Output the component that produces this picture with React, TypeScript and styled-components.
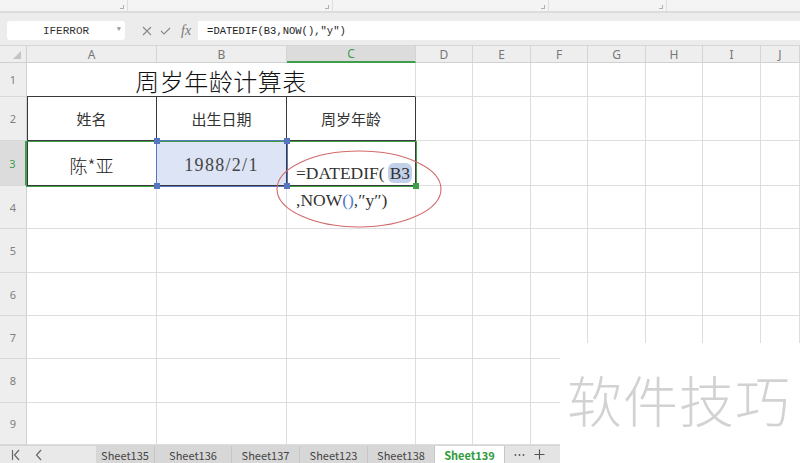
import styled, { createGlobalStyle } from "styled-components";

const GlobalStyle = createGlobalStyle`
  html, body { margin: 0; padding: 0; }
  body {
    width: 800px;
    height: 463px;
    overflow: hidden;
    background: #fff;
    font-family: "Noto Sans CJK SC", "Noto Sans", sans-serif;
  }
`;

const COL_WIDTHS = [130, 130, 129, 57, 58, 57, 58, 57, 58, 39];
const COL_NAMES = ["A", "B", "C", "D", "E", "F", "G", "H", "I", "J"];
const ROW_HEIGHTS = [34, 44, 45, 43, 44, 43, 43, 44, 42];
const GROUP_MARKS = [120, 325, 541, 659];
const SHEETS = [
  { name: "Sheet135", width: 59 },
  { name: "Sheet136", width: 77 },
  { name: "Sheet137", width: 68 },
  { name: "Sheet123", width: 68 },
  { name: "Sheet138", width: 67 },
];

const Page = styled.div`
  position: relative;
  width: 800px;
  height: 463px;
  display: flex;
  flex-direction: column;
  overflow: hidden;
`;

const Ribbon = styled.div`
  height: 11px;
  flex-shrink: 0;
  background: #f4f4f4;
  border-bottom: 2px solid #dcdcdc;
  position: relative;
`;

const GroupMark = styled.div<{ $x: number }>`
  position: absolute;
  left: ${(p) => p.$x}px;
  top: 5px;
  width: 3px;
  height: 3px;
  border-right: 1px solid #b0b0b0;
  border-bottom: 1px solid #b0b0b0;
  &::after {
    content: "";
    position: absolute;
    left: 7px;
    top: -5px;
    width: 1px;
    height: 11px;
    background: #dedede;
  }
`;

const FormulaBar = styled.div`
  height: 33px;
  flex-shrink: 0;
  background: #ececec;
  display: flex;
  align-items: flex-start;
  padding-top: 8px;
  box-sizing: border-box;
  border-bottom: 1px solid #d6d6d6;
`;

const NameBox = styled.div`
  margin-left: 7px;
  width: 118px;
  height: 19px;
  background: #fff;
  border-radius: 3px;
  display: flex;
  align-items: center;
  justify-content: center;
  position: relative;
  font-family: "Liberation Mono", "DejaVu Sans Mono", monospace;
  font-size: 11px;
  color: #333;
`;

const Caret = styled.span`
  position: absolute;
  right: 4px;
  top: 4px;
  font-size: 7px;
  color: #999;
`;

const BarIcons = styled.div`
  display: flex;
  align-items: center;
  height: 19px;
  margin-left: 17px;
  gap: 8px;
  color: #8a8a8a;
`;

const Fx = styled.span`
  font-family: "Liberation Serif", serif;
  font-style: italic;
  font-size: 14px;
  color: #777;
  margin-left: 2px;
`;

const FormulaInput = styled.div`
  margin-left: 7px;
  flex: 1;
  height: 19px;
  background: #fff;
  display: flex;
  align-items: center;
  padding-left: 9px;
  font-family: "Liberation Mono", "DejaVu Sans Mono", monospace;
  font-size: 10.5px;
  color: #222;
`;

const Sheet = styled.div`
  display: grid;
  flex-shrink: 0;
  grid-template-columns: 27px ${COL_WIDTHS.map((w) => `${w}px`).join(" ")};
  grid-template-rows: 17px ${ROW_HEIGHTS.map((h) => `${h}px`).join(" ")};
  background: #fff;
`;

const Corner = styled.div`
  background: #eeeeee;
  border-right: 1px solid #d0d0d0;
  border-bottom: 1px solid #d0d0d0;
  position: relative;
  &::after {
    content: "";
    position: absolute;
    right: 5px;
    bottom: 3px;
    border-left: 8px solid transparent;
    border-bottom: 8px solid #c4c4c4;
  }
`;

const ColHead = styled.div<{ $active?: boolean }>`
  background: ${(p) => (p.$active ? "#dcdcdc" : "#eeeeee")};
  border-right: 1px solid #d4d4d4;
  border-bottom: ${(p) => (p.$active ? "2px solid #3f9e4a" : "1px solid #d0d0d0")};
  display: flex;
  align-items: center;
  justify-content: center;
  font-family: "Noto Sans", sans-serif;
  font-size: 12px;
  color: ${(p) => (p.$active ? "#3f9e4a" : "#777")};
  box-sizing: border-box;
`;

const RowHead = styled.div<{ $active?: boolean }>`
  background: ${(p) => (p.$active ? "#dcdcdc" : "#eeeeee")};
  border-right: ${(p) => (p.$active ? "2px solid #3f9e4a" : "1px solid #d0d0d0")};
  border-bottom: 1px solid #d8d8d8;
  display: flex;
  align-items: center;
  justify-content: center;
  font-family: "Noto Sans", sans-serif;
  font-size: 11px;
  color: ${(p) => (p.$active ? "#3f9e4a" : "#808080")};
  box-sizing: border-box;
`;

const Cell = styled.div<{ $dark?: boolean; $first?: boolean; $fill?: string; $span?: number; $darkBottom?: boolean }>`
  grid-column: span ${(p) => p.$span ?? 1};
  background: ${(p) => p.$fill ?? "#fff"};
  border-right: 1px solid ${(p) => (p.$dark ? "#3a3a3a" : "#dedede")};
  border-bottom: 1px solid ${(p) => (p.$dark || p.$darkBottom ? "#3a3a3a" : "#dedede")};
  box-shadow: ${(p) => (p.$first ? "inset 1px 0 #3a3a3a" : "none")};
  box-sizing: border-box;
  display: flex;
  align-items: center;
  justify-content: center;
  color: #222;
`;

const Title = styled.span`
  font-size: 24px;
  font-weight: 300;
  letter-spacing: 0.5px;
  color: #111;
  margin-top: 1px;
`;

const HeadText = styled.span`
  font-size: 15px;
  color: #333;
`;

const NameText = styled.span`
  font-size: 18px;
  font-weight: 300;
  color: #222;
  margin-top: 4px;
`;

const DateText = styled.span`
  font-family: "Liberation Serif", serif;
  font-size: 18px;
  letter-spacing: 1.3px;
  color: #444;
  margin-top: 4px;
`;

const Selection = styled.div<{ $x: number; $y: number; $w: number; $h: number; $color: string }>`
  position: absolute;
  left: ${(p) => p.$x}px;
  top: ${(p) => p.$y}px;
  width: ${(p) => p.$w}px;
  height: ${(p) => p.$h}px;
  border: 1.5px solid ${(p) => p.$color};
  box-sizing: border-box;
  pointer-events: none;
`;

const Handle = styled.div<{ $x: number; $y: number; $color: string }>`
  position: absolute;
  left: ${(p) => p.$x - 3}px;
  top: ${(p) => p.$y - 3}px;
  width: 6px;
  height: 6px;
  background: ${(p) => p.$color};
`;

const OverflowText = styled.div`
  position: absolute;
  left: 296px;
  top: 160px;
  font-family: "Liberation Serif", "DejaVu Serif", serif;
  font-size: 17.5px;
  line-height: 27px;
  color: #333;
  white-space: nowrap;
`;

const Ref = styled.span`
  background: #c3d0ea;
  border-radius: 6px;
  padding: 0 2px;
  margin-left: 3px;
`;

const Paren = styled.span`
  color: #4f78c8;
`;

const Ring = styled.svg`
  position: absolute;
  left: 274px;
  top: 148px;
`;

const TabBar = styled.div`
  height: 18px;
  flex-shrink: 0;
  box-sizing: border-box;
  display: flex;
  background: #e9e9e9;
  border-top: 1px solid #d6d6d6;
  font-size: 11px;
`;

const Nav = styled.div`
  width: 96px;
  display: flex;
  align-items: center;
  gap: 12px;
  padding-left: 11px;
  box-sizing: border-box;
  color: #666;
`;

const Tab = styled.div<{ $w: number; $active?: boolean }>`
  width: ${(p) => p.$w}px;
  display: flex;
  align-items: center;
  justify-content: center;
  background: ${(p) => (p.$active ? "#fff" : "#d7d7d7")};
  border-right: 1px solid #c6c6c6;
  box-sizing: border-box;
  color: ${(p) => (p.$active ? "#2f9b3c" : "#444")};
  font-weight: ${(p) => (p.$active ? 700 : 400)};
`;

const TabTools = styled.div`
  width: 55px;
  display: flex;
  align-items: center;
  gap: 9px;
  padding-left: 9px;
  box-sizing: border-box;
  background: #e4e4e4;
`;

const Watermark = styled.div`
  position: absolute;
  left: 560px;
  top: 343px;
  width: 240px;
  height: 120px;
  background: #fff;
  display: flex;
  align-items: flex-start;
  padding: 22px 0 0 7px;
  box-sizing: border-box;
  font-size: 55px;
  font-weight: 300;
  letter-spacing: 1px;
  color: #d2d2d2;
  line-height: 1.2;
`;

const Arrow = ({ first }: { first?: boolean }) => (
  <svg width="10" height="12" viewBox="0 0 10 12">
    {first && <line x1="1.5" y1="1" x2="1.5" y2="11" stroke="#666" strokeWidth="1.2" />}
    <polyline points="8,1 3.5,6 8,11" fill="none" stroke="#666" strokeWidth="1.2" />
  </svg>
);

const MoreDots = () => (
  <svg width="11" height="4" viewBox="0 0 11 4">
    {[1.5, 5.5, 9.5].map((x) => (
      <circle key={x} cx={x} cy="2" r="0.9" fill="#555" />
    ))}
  </svg>
);

const Plus = () => (
  <svg width="11" height="11" viewBox="0 0 11 11">
    <path d="M5.5 0.5 V10.5 M0.5 5.5 H10.5" stroke="#555" strokeWidth="1.1" />
  </svg>
);

const renderEmpty = (from: number, row: number) =>
  COL_NAMES.slice(from).map((c) => <Cell key={`${c}${row}`} />);

export default function App() {
  return (
    <Page>
      <GlobalStyle />
      <Ribbon>
        {GROUP_MARKS.map((x) => (
          <GroupMark key={x} $x={x} />
        ))}
      </Ribbon>
      <FormulaBar>
        <NameBox>
          IFERROR
          <Caret>▼</Caret>
        </NameBox>
        <BarIcons>
          <svg width="10" height="10" viewBox="0 0 10 10">
            <path d="M1 1 L9 9 M9 1 L1 9" stroke="#888" strokeWidth="1.1" />
          </svg>
          <svg width="11" height="10" viewBox="0 0 11 10">
            <polyline points="1,5 4,8 10,2" fill="none" stroke="#888" strokeWidth="1.1" />
          </svg>
          <Fx>fx</Fx>
        </BarIcons>
        <FormulaInput>=DATEDIF(B3,NOW(),″y″)</FormulaInput>
      </FormulaBar>

      <Sheet>
        <Corner />
        {COL_NAMES.map((c) => (
          <ColHead key={c} $active={c === "C"}>
            {c}
          </ColHead>
        ))}

        <RowHead>1</RowHead>
        <Cell $span={3} $darkBottom>
          <Title>周岁年龄计算表</Title>
        </Cell>
        {renderEmpty(3, 1)}

        <RowHead>2</RowHead>
        <Cell $dark $first>
          <HeadText>姓名</HeadText>
        </Cell>
        <Cell $dark>
          <HeadText>出生日期</HeadText>
        </Cell>
        <Cell $dark>
          <HeadText>周岁年龄</HeadText>
        </Cell>
        {renderEmpty(3, 2)}

        <RowHead $active>3</RowHead>
        <Cell $dark $first>
          <NameText>陈*亚</NameText>
        </Cell>
        <Cell $dark $fill="#dce4f5">
          <DateText>1988/2/1</DateText>
        </Cell>
        <Cell $dark />
        {renderEmpty(3, 3)}

        {[4, 5, 6, 7, 8, 9].map((r) => [
          <RowHead key={`h${r}`}>{r}</RowHead>,
          ...renderEmpty(0, r),
        ])}
      </Sheet>

      <TabBar>
        <Nav>
          <Arrow first />
          <Arrow />
        </Nav>
        {SHEETS.map((s) => (
          <Tab key={s.name} $w={s.width}>
            {s.name}
          </Tab>
        ))}
        <Tab $w={70} $active>
          Sheet139
        </Tab>
        <TabTools>
          <MoreDots />
          <Plus />
        </TabTools>
      </TabBar>

      <Selection $x={26} $y={141} $w={391} $h={46} $color="#3f9e4a" />
      <Handle $x={416} $y={186} $color="#3f9e4a" />
      <Selection $x={156} $y={140} $w={132} $h={47} $color="#5677c0" />
      <Handle $x={157} $y={141} $color="#5677c0" />
      <Handle $x={287} $y={141} $color="#5677c0" />
      <Handle $x={157} $y={186} $color="#5677c0" />
      <Handle $x={287} $y={186} $color="#5677c0" />

      <Ring width="170" height="82" viewBox="0 0 170 82">
        <ellipse cx="85" cy="41" rx="82" ry="38" fill="none" stroke="#d36a6a" strokeWidth="1.1" />
      </Ring>

      <OverflowText>
        <div>
          =DATEDIF(<Ref>B3</Ref>
        </div>
        <div>
          ,NOW<Paren>()</Paren>,″y″)
        </div>
      </OverflowText>

      <Watermark>软件技巧</Watermark>
    </Page>
  );
}
